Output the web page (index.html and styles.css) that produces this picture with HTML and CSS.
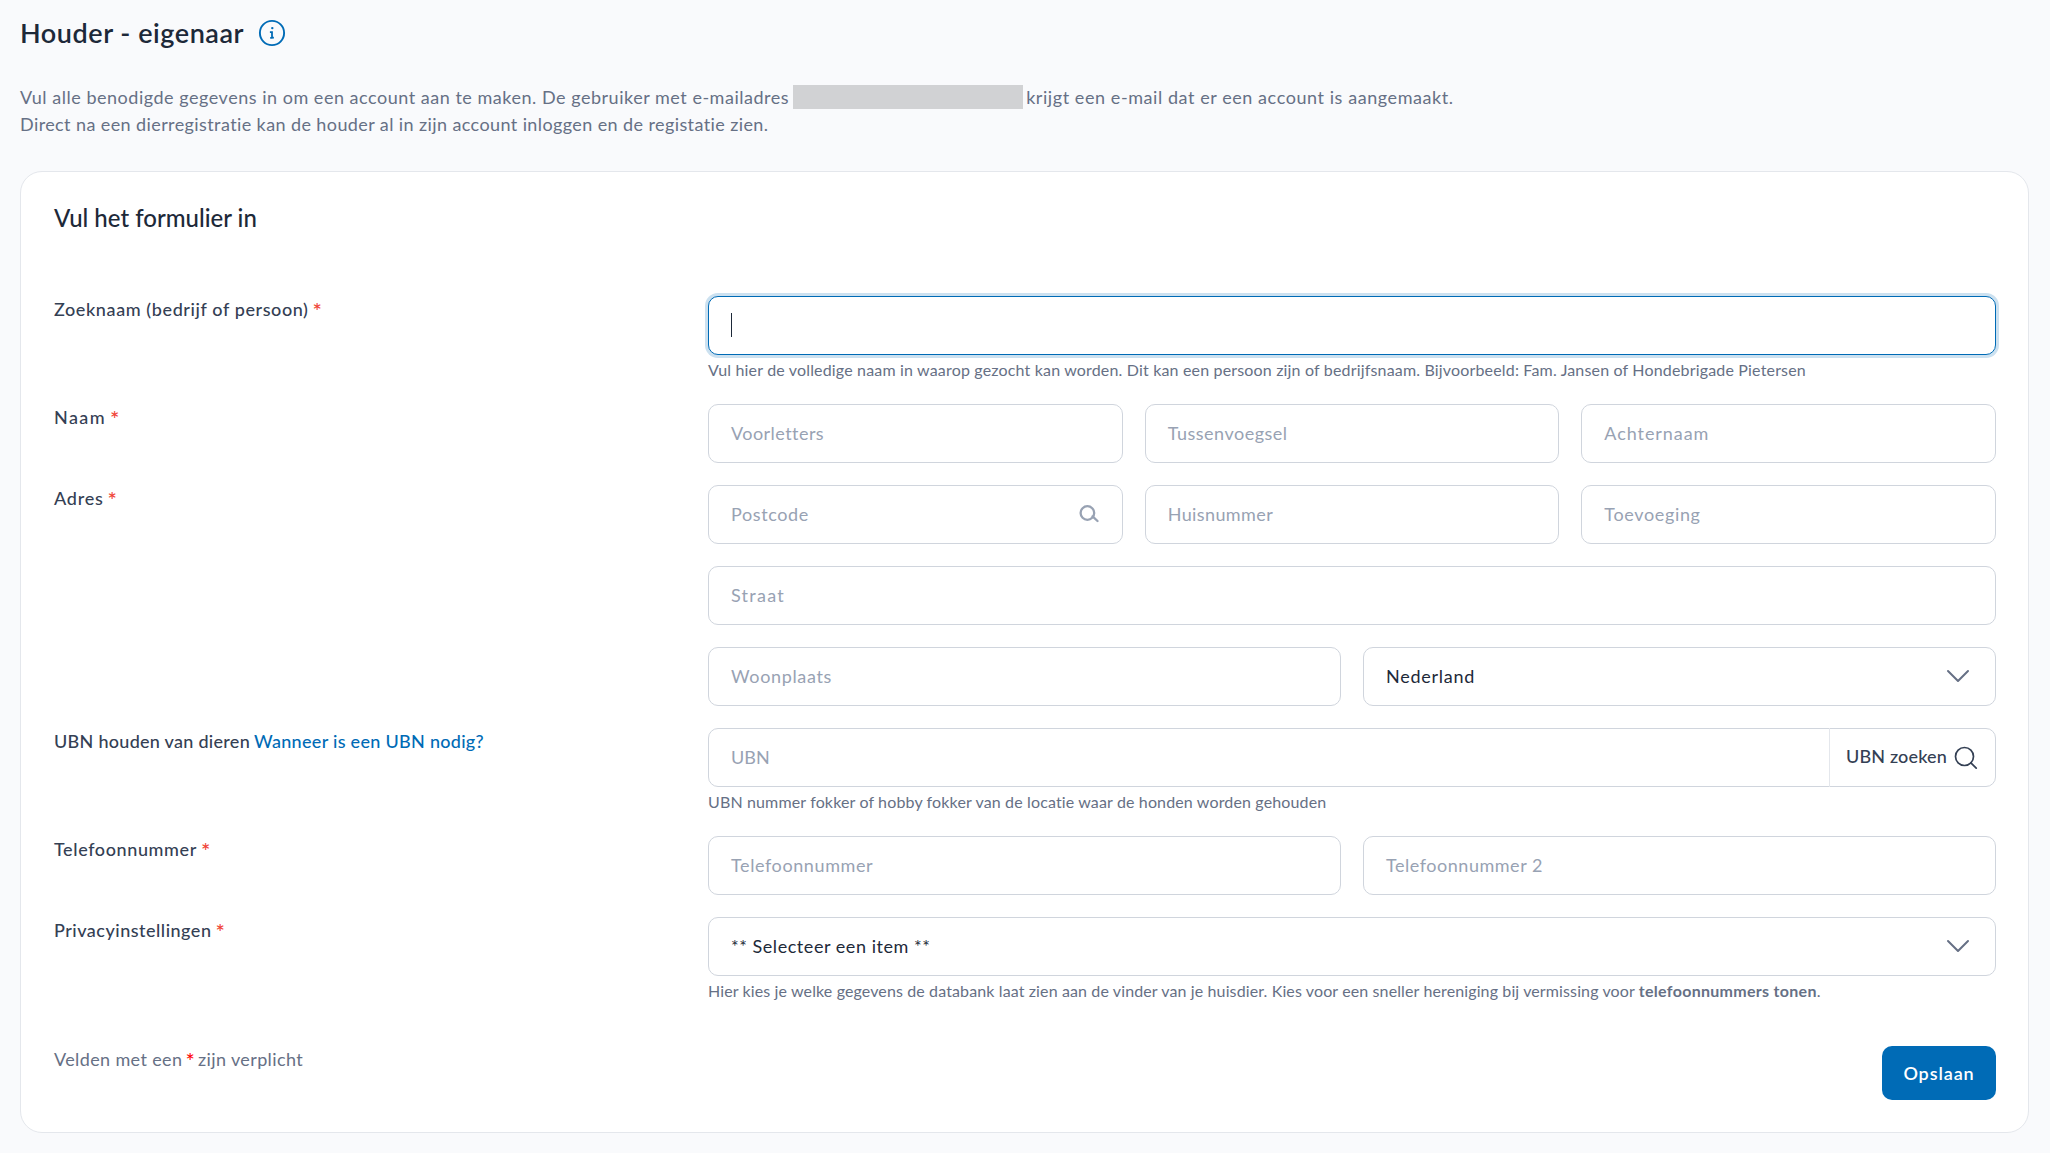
FILE: index.html
```html
<!DOCTYPE html>
<html lang="nl">
<head>
<meta charset="utf-8">
<title>Houder - eigenaar</title>
<link rel="stylesheet" href="styles.css">
</head>
<body>
<header class="page-head">
  <h1 class="page-title">Houder - eigenaar</h1>
  <svg class="info" width="28" height="28" viewBox="0 0 28 28" fill="none" stroke="currentColor"><circle cx="14" cy="14" r="12.1" stroke-width="1.9"/><circle cx="14.3" cy="9.1" r="1.2" fill="currentColor" stroke="none"/><path d="M11.9 13.1h2.1v4.4q0 1.4 1.9 1.1M12.2 18.8h2.4" stroke-width="1.8"/></svg>
</header>
<div class="intro">
  <p class="line"><span class="t-intro1">Vul alle benodigde gegevens in om een account aan te maken. De gebruiker met e-mailadres</span><span class="redacted"></span><span class="t-intro2">krijgt een e-mail dat er een account is aangemaakt.</span></p>
  <p class="line"><span class="t-intro3">Direct na een dierregistratie kan de houder al in zijn account inloggen en de registatie zien.</span></p>
</div>
<main class="card">
  <h2 class="card-title">Vul het formulier in</h2>
  <form class="form">
    <div class="row">
      <label class="label"><span class="t-zoek">Zoeknaam (bedrijf of persoon)</span><span class="req">*</span></label>
      <div class="controls">
        <div class="field focused"><span class="caret"></span></div>
        <p class="hint t-hint1">Vul hier de volledige naam in waarop gezocht kan worden. Dit kan een persoon zijn of bedrijfsnaam. Bijvoorbeeld: Fam. Jansen of Hondebrigade Pietersen</p>
      </div>
    </div>
    <div class="row">
      <label class="label"><span class="t-naam">Naam</span><span class="req">*</span></label>
      <div class="controls thirds">
        <div class="field"><span class="t-voor">Voorletters</span></div>
        <div class="field"><span class="t-tus">Tussenvoegsel</span></div>
        <div class="field"><span class="t-acht">Achternaam</span></div>
      </div>
    </div>
    <div class="row">
      <label class="label"><span class="t-adres">Adres</span><span class="req">*</span></label>
      <div class="controls stack">
        <div class="thirds">
          <div class="field lookup"><span class="t-post">Postcode</span><svg width="20" height="18" viewBox="0 0 20 18" fill="none" stroke="currentColor" stroke-width="2.3"><circle cx="8.4" cy="8" r="6.8"/><path d="M13.6 11.4l4.9 4.6" stroke-linecap="round"/></svg></div>
          <div class="field"><span class="t-huis">Huisnummer</span></div>
          <div class="field"><span class="t-toev">Toevoeging</span></div>
        </div>
        <div class="field"><span class="t-straat">Straat</span></div>
        <div class="halves">
          <div class="field"><span class="t-woon">Woonplaats</span></div>
          <div class="field select"><span class="t-ned">Nederland</span><svg class="chevron" width="24" height="14" viewBox="0 0 24 14" fill="none" stroke="currentColor" stroke-width="2" stroke-linecap="round" stroke-linejoin="round"><path d="M2 2l10 10L22 2"/></svg></div>
        </div>
      </div>
    </div>
    <div class="row">
      <label class="label"><span class="t-ubnl">UBN houden van dieren</span><a class="link">Wanneer is een UBN nodig?</a></label>
      <div class="controls">
        <div class="field with-addon"><span class="t-ubn">UBN</span><div class="addon"><span class="t-zoeken">UBN zoeken</span><svg width="24" height="24" viewBox="0 0 24 24" fill="none" stroke="currentColor" stroke-width="1.7" stroke-linecap="round"><circle cx="10.5" cy="10.5" r="9"/><path d="M16.9 16.9l5.3 5.3"/></svg></div></div>
        <p class="hint t-hint2">UBN nummer fokker of hobby fokker van de locatie waar de honden worden gehouden</p>
      </div>
    </div>
    <div class="row">
      <label class="label"><span class="t-tell">Telefoonnummer</span><span class="req">*</span></label>
      <div class="controls halves">
        <div class="field"><span class="t-tel">Telefoonnummer</span></div>
        <div class="field"><span class="t-tel2">Telefoonnummer 2</span></div>
      </div>
    </div>
    <div class="row">
      <label class="label"><span class="t-priv">Privacyinstellingen</span><span class="req">*</span></label>
      <div class="controls">
        <div class="field select"><span class="t-sel">** Selecteer een item **</span><svg class="chevron" width="24" height="14" viewBox="0 0 24 14" fill="none" stroke="currentColor" stroke-width="2" stroke-linecap="round" stroke-linejoin="round"><path d="M2 2l10 10L22 2"/></svg></div>
        <p class="hint t-hint3">Hier kies je welke gegevens de databank laat zien aan de vinder van je huisdier. Kies voor een sneller hereniging bij vermissing voor <b>telefoonnummers tonen</b>.</p>
      </div>
    </div>
  </form>
  <footer class="card-foot">
    <p class="note"><span>Velden met een</span><span class="star">*</span><span>zijn verplicht</span></p>
    <button class="save" type="button">Opslaan</button>
  </footer>
</main>
</body>
</html>
```
FILE: styles.css
```css
* { box-sizing: border-box; }
body {
  margin: 0;
  padding: 0 21px 0 20px;
  background: #f9fafc;
  font-family: Lato, sans-serif;
  font-size: 18px;
  line-height: 27px;
  color: #667085;
}
h1, h2, p { margin: 0; }
span, p, a { white-space: nowrap; }

.page-head { display: flex; align-items: center; gap: 14px; height: 66px; }
.page-title {
  padding-bottom: 1px;
  font-size: 27px;
  line-height: 36px;
  font-weight: 600;
  letter-spacing: .54px;
  color: #1d2939;
}
.info { color: #006bb6; }

.intro { height: 105px; padding-top: 18px; }
.line { display: flex; }
.redacted { width: 230px; height: 24px; margin: 1px 3px 0 4px; background: #d1d2d4; }

.card {
  height: 962px;
  padding: 30px 32px 0 33px;
  background: #fff;
  border: 1px solid #e4e7ec;
  border-radius: 22px;
}
.card-title { font-size: 24px; line-height: 32px; font-weight: 500; color: #1d2939; }
.form { display: flex; flex-direction: column; gap: 22px; padding-top: 62px; }
.row { display: grid; grid-template-columns: 654px 1fr; }
.label { display: flex; align-items: flex-start; gap: 4px; font-weight: 500; color: #344054; }
.req { font-size: 22px; line-height: 29px; height: 27px; color: #f04438; }
.link { color: #006bb6; letter-spacing: .29px; }

.field {
  display: flex;
  align-items: center;
  height: 59px;
  padding: 0 22px;
  background: #fff;
  border: 1px solid #d0d5dd;
  border-radius: 10px;
  color: #98a2b3;
}
.focused { border-color: #006bb6; box-shadow: 0 0 0 3px #cce1f0; }
.caret { width: 1px; height: 24px; margin-bottom: 1px; background: #1d2939; }
.thirds { display: grid; grid-template-columns: repeat(3, 1fr); gap: 22px; }
.halves { display: grid; grid-template-columns: 1fr 1fr; gap: 22px; }
.stack { display: grid; gap: 22px; }
.lookup { justify-content: space-between; padding-right: 23px; }
.lookup svg { margin-bottom: 2px; }
.select { justify-content: space-between; padding-right: 25px; color: #1d2939; }
.chevron { color: #667085; margin-bottom: 1px; }
.with-addon { justify-content: space-between; padding-right: 0; }
.addon {
  display: flex;
  align-items: center;
  gap: 7px;
  height: 59px;
  width: 166px;
  padding-left: 16px;
  border-left: 1px solid #e4e7ec;
  font-weight: 500;
  color: #344054;
}
.addon span { padding-bottom: 2px; }
.hint { height: 27px; padding-top: 3px; font-size: 16px; line-height: 23px; }

.card-foot { display: flex; justify-content: space-between; align-items: flex-start; padding-top: 43px; }
.note { display: flex; gap: 4px; letter-spacing: .37px; }
.star { font-size: 22px; line-height: 29px; height: 27px; margin: 0 -1px; color: #f00; }
.save {
  width: 114px;
  height: 54px;
  padding: 0;
  border: 0;
  border-radius: 10px;
  background: #006bb6;
  color: #fff;
  font: 600 18px/27px Lato, sans-serif;
  letter-spacing: .9px;
}

/* per-text tracking */
.t-intro1 { letter-spacing: .52px; }
.t-intro2 { letter-spacing: .57px; }
.t-intro3 { letter-spacing: .4px; }
.t-zoek { letter-spacing: .6px; }
.t-naam { letter-spacing: 1.4px; }
.t-adres { letter-spacing: .74px; }
.t-ubnl { letter-spacing: .28px; }
.t-tell { letter-spacing: .61px; }
.t-priv { letter-spacing: .5px; }
.t-voor { letter-spacing: .45px; }
.t-tus { letter-spacing: .5px; }
.t-acht { letter-spacing: .93px; }
.t-post { letter-spacing: .62px; }
.t-huis { letter-spacing: .4px; }
.t-toev { letter-spacing: .65px; }
.t-straat { letter-spacing: 1.25px; }
.t-woon { letter-spacing: .65px; }
.t-ned { letter-spacing: .73px; }
.t-ubn { letter-spacing: .1px; }
.t-tel { letter-spacing: .6px; }
.t-tel2 { letter-spacing: .53px; }
.t-sel { letter-spacing: .55px; }
.t-zoeken { letter-spacing: .16px; }
.t-hint1 { letter-spacing: .17px; }
.t-hint2 { letter-spacing: .14px; }
.t-hint3 { letter-spacing: .12px; }
.t-hint3 b { letter-spacing: .3px; }
```
